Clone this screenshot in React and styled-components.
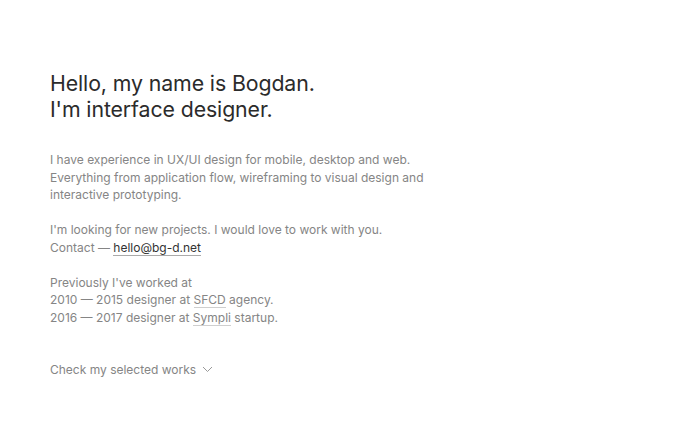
import React from "react";
import styled, { createGlobalStyle } from "styled-components";

const GlobalStyle = createGlobalStyle`
  html, body {
    margin: 0;
    padding: 0;
    background: #fff;
  }
  body {
    font-family: Inter, "Noto Sans", sans-serif;
    -webkit-font-smoothing: antialiased;
  }
`;

const Page = styled.main`
  padding: 70px 50px 0;
`;

const Heading = styled.h1`
  margin: 0 0 29px;
  font-size: 21.3px;
  line-height: 26px;
  font-weight: 400;
  color: #2b2b2b;
  letter-spacing: -0.1px;
`;

const Text = styled.p`
  margin: 0 0 17.5px;
  font-size: 12px;
  line-height: 17.5px;
  color: #858585;
  max-width: 400px;
`;

const Link = styled.a`
  display: inline-block;
  line-height: 15px;
  color: ${(p) => (p.$strong ? "#333" : "#858585")};
  text-decoration: none;
  border-bottom: 1px solid ${(p) => (p.$strong ? "#aaa" : "#cfcfcf")};
`;

const More = styled.button`
  margin-top: 35px;
  padding: 0;
  border: 0;
  background: none;
  display: flex;
  align-items: center;
  gap: 6px;
  font-family: inherit;
  font-size: 12px;
  line-height: 17.5px;
  color: #858585;
  cursor: pointer;
`;

const Chevron = () => (
  <svg width="11" height="7" viewBox="0 0 11 7" fill="none">
    <path d="M1 1l4.5 4.5L10 1" stroke="#999" strokeWidth="1" />
  </svg>
);

export default function App() {
  return (
    <Page>
      <GlobalStyle />
      <Heading>
        Hello, my name is Bogdan.
        <br />
        I'm interface designer.
      </Heading>
      <Text>
        I have experience in UX/UI design for mobile, desktop and web.
        <br />
        Everything from application flow, wireframing to visual design and
        interactive prototyping.
      </Text>
      <Text>
        I'm looking for new projects. I would love to work with you.
        <br />
        Contact — <Link $strong href="#">hello@bg-d.net</Link>
      </Text>
      <Text>
        Previously I've worked at
        <br />
        2010 — 2015 designer at <Link href="#">SFCD</Link> agency.
        <br />
        2016 — 2017 designer at <Link href="#">Sympli</Link> startup.
      </Text>
      <More>
        Check my selected works
        <Chevron />
      </More>
    </Page>
  );
}
